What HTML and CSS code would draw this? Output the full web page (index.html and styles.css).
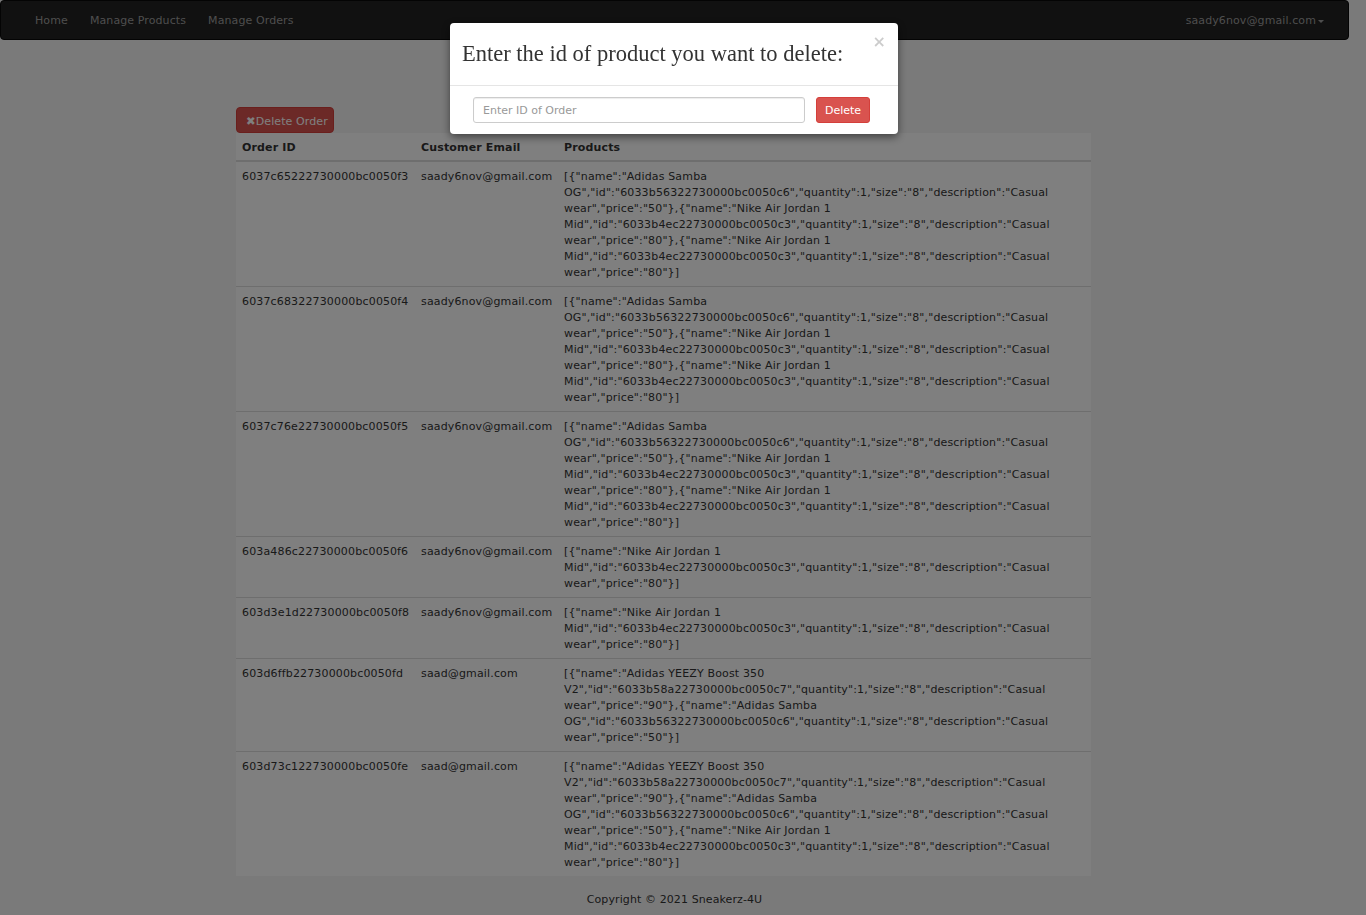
FILE: index.html
```html
<!DOCTYPE html>
<html>
<head>
<meta charset="utf-8">
<title>Manage Orders</title>
<link rel="stylesheet" href="styles.css">
</head>
<body>
<nav class="navbar">
  <ul class="nav-left">
    <li><a href="#">Home</a></li>
    <li><a href="#">Manage Products</a></li>
    <li><a href="#">Manage Orders</a></li>
  </ul>
  <div class="nav-right"><a href="#">saady6nov@gmail.com<span class="caret"></span></a></div>
</nav>

<main class="main">
  <button class="btn-danger btn-delete-order"><span class="x-icon">✖</span>Delete Order</button>
  <table class="orders">
    <thead>
      <tr><th class="c-id">Order ID</th><th class="c-email">Customer Email</th><th>Products</th></tr>
    </thead>
    <tbody>
      <tr><td>6037c65222730000bc0050f3</td><td>saady6nov@gmail.com</td><td>[{"name":"Adidas Samba OG","id":"6033b56322730000bc0050c6","quantity":1,"size":"8","description":"Casual wear","price":"50"},{"name":"Nike Air Jordan 1 Mid","id":"6033b4ec22730000bc0050c3","quantity":1,"size":"8","description":"Casual wear","price":"80"},{"name":"Nike Air Jordan 1 Mid","id":"6033b4ec22730000bc0050c3","quantity":1,"size":"8","description":"Casual wear","price":"80"}]</td></tr>
      <tr><td>6037c68322730000bc0050f4</td><td>saady6nov@gmail.com</td><td>[{"name":"Adidas Samba OG","id":"6033b56322730000bc0050c6","quantity":1,"size":"8","description":"Casual wear","price":"50"},{"name":"Nike Air Jordan 1 Mid","id":"6033b4ec22730000bc0050c3","quantity":1,"size":"8","description":"Casual wear","price":"80"},{"name":"Nike Air Jordan 1 Mid","id":"6033b4ec22730000bc0050c3","quantity":1,"size":"8","description":"Casual wear","price":"80"}]</td></tr>
      <tr><td>6037c76e22730000bc0050f5</td><td>saady6nov@gmail.com</td><td>[{"name":"Adidas Samba OG","id":"6033b56322730000bc0050c6","quantity":1,"size":"8","description":"Casual wear","price":"50"},{"name":"Nike Air Jordan 1 Mid","id":"6033b4ec22730000bc0050c3","quantity":1,"size":"8","description":"Casual wear","price":"80"},{"name":"Nike Air Jordan 1 Mid","id":"6033b4ec22730000bc0050c3","quantity":1,"size":"8","description":"Casual wear","price":"80"}]</td></tr>
      <tr><td>603a486c22730000bc0050f6</td><td>saady6nov@gmail.com</td><td>[{"name":"Nike Air Jordan 1 Mid","id":"6033b4ec22730000bc0050c3","quantity":1,"size":"8","description":"Casual wear","price":"80"}]</td></tr>
      <tr><td>603d3e1d22730000bc0050f8</td><td>saady6nov@gmail.com</td><td>[{"name":"Nike Air Jordan 1 Mid","id":"6033b4ec22730000bc0050c3","quantity":1,"size":"8","description":"Casual wear","price":"80"}]</td></tr>
      <tr><td>603d6ffb22730000bc0050fd</td><td>saad@gmail.com</td><td>[{"name":"Adidas YEEZY Boost 350 V2","id":"6033b58a22730000bc0050c7","quantity":1,"size":"8","description":"Casual wear","price":"90"},{"name":"Adidas Samba OG","id":"6033b56322730000bc0050c6","quantity":1,"size":"8","description":"Casual wear","price":"50"}]</td></tr>
      <tr><td>603d73c122730000bc0050fe</td><td>saad@gmail.com</td><td>[{"name":"Adidas YEEZY Boost 350 V2","id":"6033b58a22730000bc0050c7","quantity":1,"size":"8","description":"Casual wear","price":"90"},{"name":"Adidas Samba OG","id":"6033b56322730000bc0050c6","quantity":1,"size":"8","description":"Casual wear","price":"50"},{"name":"Nike Air Jordan 1 Mid","id":"6033b4ec22730000bc0050c3","quantity":1,"size":"8","description":"Casual wear","price":"80"}]</td></tr>
    </tbody>
  </table>
</main>

<footer class="footer">Copyright © 2021 Sneakerz-4U</footer>

<div class="backdrop"></div>
<div class="modal-wrap">
  <div class="modal">
    <div class="modal-header">
      <h4 class="modal-title">Enter the id of product you want to delete:</h4>
      <span class="close">×</span>
    </div>
    <div class="modal-body">
      <input class="form-control" type="text" placeholder="Enter ID of Order">
      <button class="btn-danger btn-delete">Delete</button>
    </div>
  </div>
</div>
</body>
</html>
```

FILE: styles.css
```css
html, body {
  height: 915px;
  overflow: hidden;
}
body {
  margin: 0;
  padding-right: 17px;
  background: #f5f5f5;
  font-family: "DejaVu Sans", Verdana, sans-serif;
  font-size: 11px;
  line-height: 16px;
  color: #333;
}

.navbar {
  box-sizing: border-box;
  height: 40px;
  background: #222;
  border: 1px solid #080808;
  border-radius: 4px;
  display: flex;
  align-items: center;
  justify-content: space-between;
  padding: 2px 24px 0 34px;
  letter-spacing: 0.1px;
}
.nav-left {
  list-style: none;
  margin: 0;
  padding: 0;
  display: flex;
  gap: 22px;
}
.navbar a {
  color: #9d9d9d;
  text-decoration: none;
}
.caret {
  display: inline-block;
  width: 0;
  height: 0;
  margin-left: 2px;
  vertical-align: middle;
  border-top: 3px solid #9d9d9d;
  border-left: 3px solid transparent;
  border-right: 3px solid transparent;
}

.main {
  width: 855px;
  margin-left: 236px;
  padding-top: 67px;
}

.btn-danger {
  font-family: "DejaVu Sans", Verdana, sans-serif;
  font-size: 11px;
  line-height: 16px;
  color: #fff;
  background: #d9534f;
  border: 1px solid #d43f3a;
  border-radius: 4px;
  cursor: pointer;
}
.btn-delete-order {
  display: block;
  box-sizing: border-box;
  height: 26px;
  width: 98px;
  padding: 2px 0 0 9px;
  text-align: left;
  letter-spacing: 0.1px;
}
.x-icon {
  font-size: 11.5px;
}

.orders {
  width: 855px;
  border-collapse: collapse;
  background: #fff;
  table-layout: fixed;
  letter-spacing: 0.15px;
}
.orders th {
  text-align: left;
  font-weight: bold;
  padding: 7px 6px 4px;
  border-bottom: 2px solid #ddd;
}
.orders th.c-id { width: 167px; }
.orders th.c-email { width: 131px; }
.orders td {
  vertical-align: top;
  padding: 7px 6px 5px;
  border-top: 1px solid #ddd;
}
.orders tbody tr:first-child td {
  border-top: 0;
}

.footer {
  text-align: center;
  margin-top: 16px;
  letter-spacing: 0.1px;
}

.backdrop {
  position: fixed;
  inset: 0;
  background: rgba(0, 0, 0, 0.5);
}
.modal-wrap {
  position: fixed;
  top: 23px;
  left: 0;
  right: 18px;
  display: flex;
  justify-content: center;
}
.modal {
  width: 448px;
  background: #fff;
  border-radius: 4px;
  box-shadow: 0 3px 9px rgba(0, 0, 0, 0.5);
}
.modal-header {
  box-sizing: border-box;
  height: 63px;
  border-bottom: 1px solid #e5e5e5;
  padding: 0 12px;
  display: flex;
  align-items: center;
  position: relative;
}
.modal-title {
  margin: 0;
  font-family: "Liberation Serif", "Times New Roman", serif;
  font-weight: normal;
  font-size: 22.5px;
  line-height: 26px;
  color: #333;
}
.close {
  position: absolute;
  top: 9px;
  right: 12px;
  font-family: "DejaVu Sans", sans-serif;
  font-size: 16px;
  font-weight: bold;
  line-height: 20px;
  color: #000;
  opacity: 0.2;
}
.modal-body {
  display: flex;
  align-items: center;
  gap: 11px;
  padding: 11px 28px 11px 23px;
}
.form-control {
  box-sizing: border-box;
  width: 332px;
  height: 26px;
  padding: 1px 9px 0;
  border: 1px solid #ccc;
  border-radius: 3px;
  font-family: "DejaVu Sans", Verdana, sans-serif;
  font-size: 11px;
  color: #555;
  box-shadow: inset 0 1px 1px rgba(0, 0, 0, 0.075);
}
.form-control::placeholder {
  color: #999;
}
.btn-delete {
  box-sizing: border-box;
  width: 54px;
  height: 26px;
  padding: 2px 0 0;
  border-radius: 3px;
}
```
